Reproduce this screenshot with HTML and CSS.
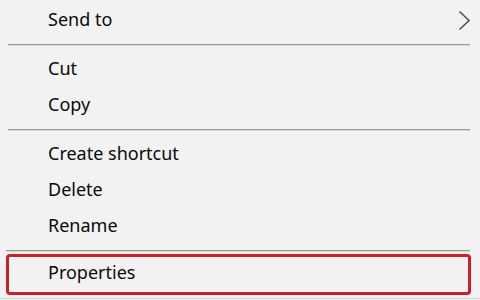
FILE: index.html
```html
<!DOCTYPE html>
<html>
<head>
<meta charset="utf-8">
<link rel="stylesheet" href="styles.css">
</head>
<body>
<ul class="menu">
  <li class="item submenu">
    <span class="label">Send to</span>
    <svg class="chevron" width="13" height="21" viewBox="0 0 13 21"><path d="M1.5 1.5 L11 10.5 L1.5 19.5" fill="none" stroke="#505050" stroke-width="1.6"/></svg>
  </li>
  <li class="sep"></li>
  <li class="item"><span class="label">Cut</span></li>
  <li class="item"><span class="label">Copy</span></li>
  <li class="sep"></li>
  <li class="item"><span class="label">Create shortcut</span></li>
  <li class="item"><span class="label">Delete</span></li>
  <li class="item"><span class="label">Rename</span></li>
  <li class="sep sep-last"></li>
  <li class="item highlighted"><span class="label">Properties</span></li>
</ul>
</body>
</html>
```
FILE: styles.css
```css
html, body {
  margin: 0;
  padding: 0;
  background: #f2f2f2;
}
body {
  width: 480px;
  height: 300px;
  overflow: hidden;
  font-family: "Noto Sans", "Open Sans", sans-serif;
  font-size: 18px;
  color: #0a0a0a;
}
.menu {
  list-style: none;
  margin: 0;
  padding: 2px 0 0 0;
  height: 299px;
  border-bottom: 1px solid #d4d4d4;
  box-sizing: border-box;
}
.item {
  display: flex;
  align-items: flex-start;
  justify-content: space-between;
  height: 36px;
  box-sizing: border-box;
  line-height: 34px;
  padding: 0 9px 2px 48px;
}
.chevron {
  display: block;
  margin-top: 8px;
}
.sep {
  height: 1px;
  margin: 6px 10px 5px 8px;
  background: #999999;
  border-bottom: 1px solid #d8d8d8;
}
.sep-last {
  margin-left: 6px;
  margin-bottom: 2px;
}
.highlighted {
  height: 41px;
  line-height: 30px;
  margin: 0 9px 0 6px;
  padding: 0 0 0 39px;
  border: 3px solid #c7212c;
  border-radius: 4px;
}
```
